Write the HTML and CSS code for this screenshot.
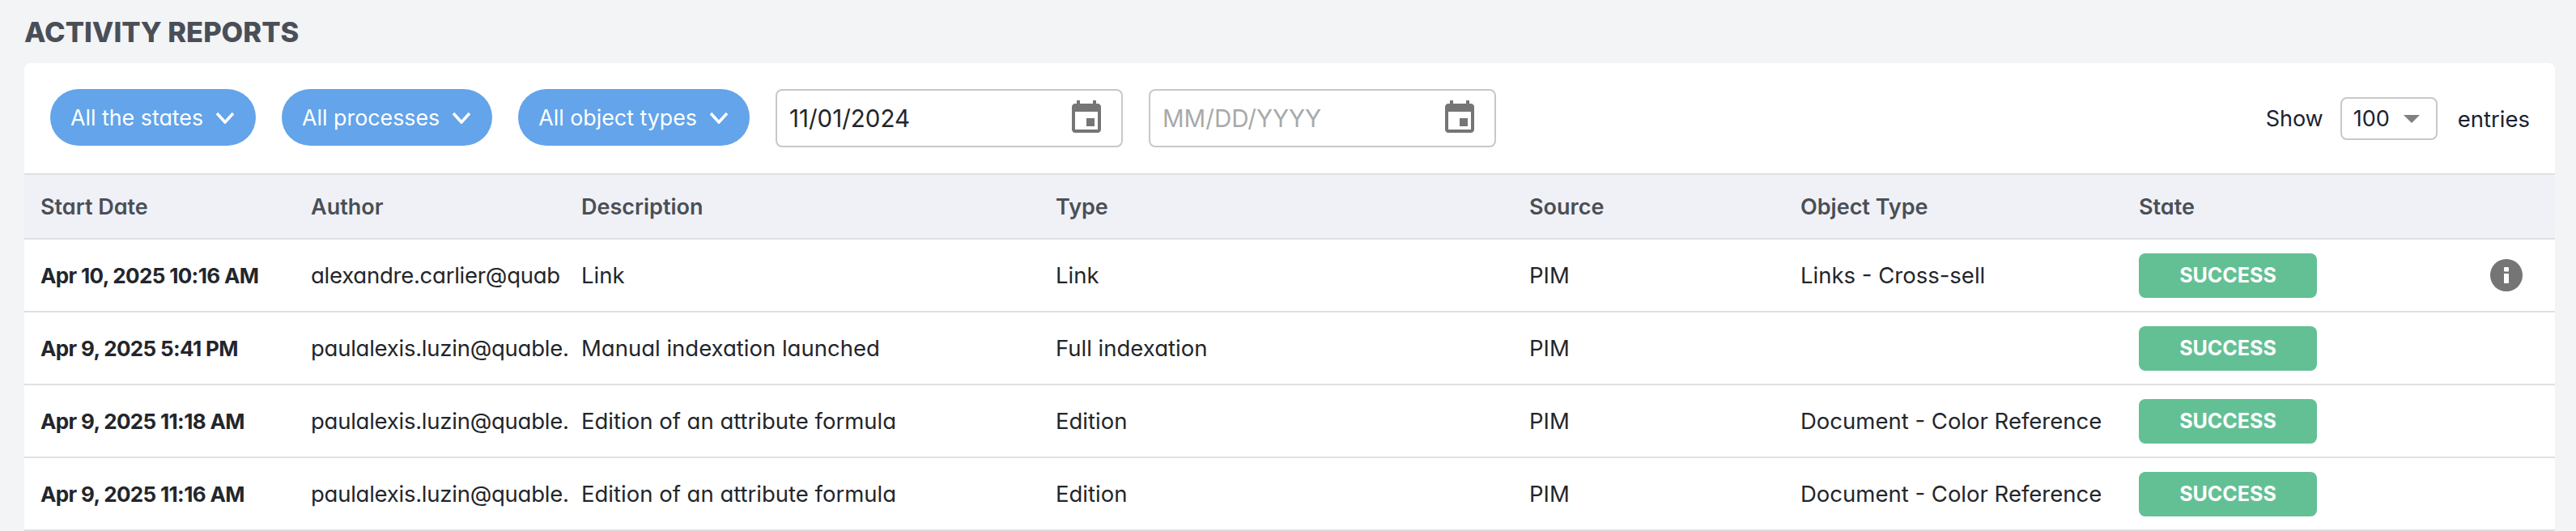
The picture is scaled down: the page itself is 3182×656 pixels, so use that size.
FILE: index.html
```html
<!DOCTYPE html>
<html lang="en">
<head>
<meta charset="utf-8">
<title>Activity reports</title>
<link rel="stylesheet" href="styles.css">
</head>
<body>
<main class="page">
  <h1 class="title">ACTIVITY REPORTS</h1>
  <section class="card">
    <div class="toolbar">
      <div class="filters">
        <button class="pill">All the states<svg class="chev" viewBox="0 0 24 15"><path d="M2 2l10 11L22 2"/></svg></button>
        <button class="pill">All processes<svg class="chev" viewBox="0 0 24 15"><path d="M2 2l10 11L22 2"/></svg></button>
        <button class="pill">All object types<svg class="chev" viewBox="0 0 24 15"><path d="M2 2l10 11L22 2"/></svg></button>
        <label class="date"><input class="date-input" type="text" value="11/01/2024"><svg class="cal" viewBox="0 0 24 24"><path d="M17 12h-5v5h5v-5zM16 1v2H8V1H6v2H5c-1.11 0-1.99.9-1.99 2L3 19c0 1.1.89 2 2 2h14c1.1 0 2-.9 2-2V5c0-1.1-.9-2-2-2h-1V1h-2zm3 18H5V8h14v11z"/></svg></label>
        <label class="date"><input class="date-input" type="text" placeholder="MM/DD/YYYY"><svg class="cal" viewBox="0 0 24 24"><path d="M17 12h-5v5h5v-5zM16 1v2H8V1H6v2H5c-1.11 0-1.99.9-1.99 2L3 19c0 1.1.89 2 2 2h14c1.1 0 2-.9 2-2V5c0-1.1-.9-2-2-2h-1V1h-2zm3 18H5V8h14v11z"/></svg></label>
      </div>
      <div class="entries">
        <span>Show</span>
        <div class="select"><span>100</span><i class="caret"></i></div>
        <span class="entries-word">entries</span>
      </div>
    </div>
    <table class="grid">
      <colgroup>
        <col class="c1"><col class="c2"><col class="c3"><col class="c4"><col class="c5"><col class="c6"><col class="c7"><col class="c8">
      </colgroup>
      <thead>
        <tr><th>Start Date</th><th>Author</th><th>Description</th><th>Type</th><th>Source</th><th>Object Type</th><th>State</th><th></th></tr>
      </thead>
      <tbody>
        <tr>
          <td class="strong">Apr 10, 2025 10:16 AM</td>
          <td class="author">alexandre.carlier@quab</td>
          <td>Link</td><td>Link</td><td>PIM</td><td>Links - Cross-sell</td>
          <td><span class="badge">SUCCESS</span></td>
          <td class="info-cell"><svg class="info" viewBox="0 0 40 40"><circle cx="20" cy="20" r="20"/><rect x="17" y="10" width="6" height="5.5" rx="1"/><rect x="17" y="18" width="6" height="12"/></svg></td>
        </tr>
        <tr>
          <td class="strong">Apr 9, 2025 5:41 PM</td>
          <td class="author">paulalexis.luzin@quable.</td>
          <td>Manual indexation launched</td><td>Full indexation</td><td>PIM</td><td></td>
          <td><span class="badge">SUCCESS</span></td><td></td>
        </tr>
        <tr>
          <td class="strong">Apr 9, 2025 11:18 AM</td>
          <td class="author">paulalexis.luzin@quable.</td>
          <td>Edition of an attribute formula</td><td>Edition</td><td>PIM</td><td>Document - Color Reference</td>
          <td><span class="badge">SUCCESS</span></td><td></td>
        </tr>
        <tr>
          <td class="strong">Apr 9, 2025 11:16 AM</td>
          <td class="author">paulalexis.luzin@quable.</td>
          <td>Edition of an attribute formula</td><td>Edition</td><td>PIM</td><td>Document - Color Reference</td>
          <td><span class="badge">SUCCESS</span></td><td></td>
        </tr>
      </tbody>
    </table>
  </section>
</main>
</body>
</html>
```
FILE: styles.css
```css
* { box-sizing: border-box; }
html, body { margin: 0; height: 656px; overflow: hidden; }
body {
  background: #f3f4f6;
  font-family: Inter, "Liberation Sans", sans-serif;
  font-feature-settings: "cv11" 1;
  font-size: 27.5px;
  color: #23262b;
}
.page { padding: 0 26px 0 30px; }
.title {
  margin: 0;
  height: 78px;
  padding-top: 21px;
  font-size: 34.5px;
  line-height: 38px;
  font-weight: 800;
  color: #4a4f57;
}
.card { background: #fff; border-radius: 8px 8px 0 0; }
.toolbar {
  display: flex;
  justify-content: space-between;
  height: 136px;
  padding: 32px 31px 0 32px;
}
.filters { display: flex; gap: 32px; align-items: flex-start; }
.pill {
  display: flex;
  align-items: center;
  gap: 15px;
  height: 70px;
  padding: 0 26px 0 25px;
  border: 0;
  border-radius: 35px;
  background: #63a4ea;
  color: #fff;
  font: inherit;
  font-size: 26.8px;
  font-feature-settings: inherit;
  white-space: nowrap;
}
.chev { width: 24px; height: 15px; fill: none; stroke: #fff; stroke-width: 3.6; }
.date {
  display: flex;
  align-items: center;
  width: 429px;
  height: 72px;
  padding: 0 19px 0 15px;
  border: 2px solid #c8c8c8;
  border-radius: 8px;
  background: #fff;
}
.date-input {
  flex: 1;
  min-width: 0;
  border: 0;
  padding: 0;
  outline: 0;
  font: inherit;
  font-size: 29.5px;
  font-feature-settings: inherit;
  color: #23262b;
}
.date-input::placeholder { color: #a9a9a9; opacity: 1; }
.cal { width: 48px; height: 48px; fill: #757575; flex: none; }
.entries { display: flex; align-items: center; height: 53px; margin-top: 10px; color: #1b2230; font-size: 27px; }
.entries-word { font-size: 27.5px; }
.select {
  display: flex;
  align-items: center;
  gap: 17px;
  width: 120px;
  height: 53px;
  margin: 0 25px 0 21px;
  padding: 0 0 0 14px;
  border: 2px solid #c8c8c8;
  border-radius: 8px;
}
.caret {
  width: 0;
  height: 0;
  border-left: 10px solid transparent;
  border-right: 10px solid transparent;
  border-top: 10px solid #808080;
}
.grid { width: 100%; table-layout: fixed; border-collapse: collapse; }
.c1, .c2 { width: 334px; }
.c3 { width: 586px; }
.c4 { width: 585px; }
.c5 { width: 335px; }
.c6 { width: 418px; }
.c7 { width: 420px; }
.grid th {
  height: 80px;
  padding: 0 0 0 20px;
  background: #f0f1f6;
  border-top: 2px solid #e0e0e2;
  border-bottom: 2px solid #e0e0e2;
  text-align: left;
  font-weight: 600;
  font-size: 27px;
  color: #4a4f57;
}
.grid td {
  height: 90px;
  padding: 0 0 0 20px;
  border-bottom: 2px solid #e0e0e2;
  white-space: nowrap;
}
.grid td.strong { font-weight: 700; font-size: 26px; letter-spacing: -0.65px; color: #23262b; }
.grid td.author { letter-spacing: -0.25px; }
.badge {
  display: flex;
  align-items: center;
  justify-content: center;
  width: 220px;
  height: 55px;
  border-radius: 8px;
  background: #63c095;
  color: #fff;
  font-weight: 700;
  font-size: 25px;
}
.grid td.info-cell { padding-left: 34px; }
.info { display: block; width: 40px; height: 40px; fill: #757575; }
.info rect { fill: #fff; }
```
